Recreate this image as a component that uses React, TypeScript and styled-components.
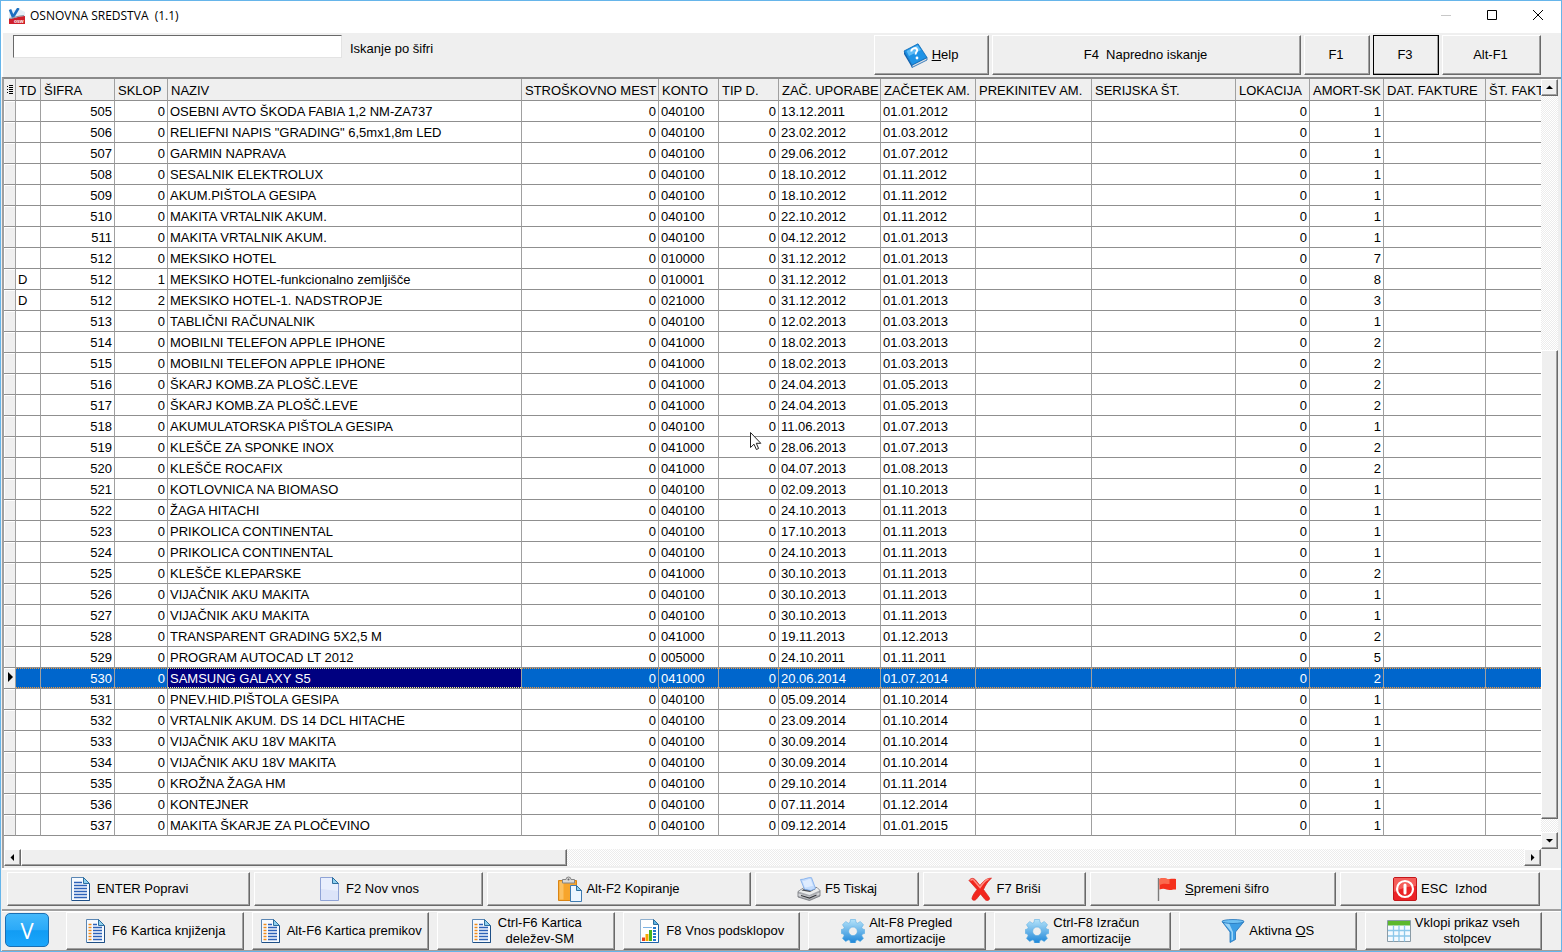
import React from 'react';
import styled, { createGlobalStyle, css } from 'styled-components';

const GlobalStyle = createGlobalStyle`
  *, *::before, *::after { box-sizing: border-box; }
  body { margin: 0; background: #efefef; }
  button, input { font: inherit; color: inherit; }
`;

const dither = css`
  background: repeating-conic-gradient(#ececec 0 25%, #ffffff 0 50%) 0 0 / 2px 2px;
`;

const raised = css`
  border: 1px solid;
  border-color: #ffffff #696969 #696969 #ffffff;
  box-shadow: inset -1px -1px 0 #a0a0a0;
  background: #efefef;
`;

const Window = styled.main`
  position: relative;
  display: flex;
  flex-direction: column;
  min-height: 100vh;
  border: 1px solid #66b5ea;
  background: #efefef;
  color: #000;
  font: 13px/16px 'Liberation Sans', Arial, sans-serif;
`;

const TitleBar = styled.header`
  display: flex;
  align-items: center;
  height: 32px;
  padding-left: 7px;
  background: #fff;
`;

const Title = styled.h1`
  flex: 1;
  margin: 0;
  padding: 0 0 2px 4px;
  font: 12px/16px 'Open Sans', 'Noto Sans', sans-serif;
  white-space: pre;
`;

const CaptionButton = styled.button<{ $dim?: boolean }>`
  display: flex;
  align-items: center;
  justify-content: center;
  width: 46px;
  height: 28px;
  padding: 0 0 4px;
  border: 0;
  background: none;
  color: ${(p) => (p.$dim ? '#c8c8c8' : '#000')};
`;

const Toolbar = styled.div`
  display: flex;
  align-items: flex-start;
  gap: 3px;
  height: 44px;
  padding: 2px 20px 0 10px;
  border-left: 2px solid #fff;
`;

const Search = styled.div`
  display: flex;
  flex: 1;
  align-items: center;
  gap: 8px;
`;

const SearchInput = styled.input`
  width: 329px;
  height: 23px;
  padding: 0 4px;
  border: 1px solid;
  border-color: #696969 #e3e3e3 #e3e3e3 #696969;
  outline: 0;
  background: #fff;
`;

const SearchLabel = styled.label`
  padding-top: 4px;
`;

const PushButton = styled.button<{ $width?: number; $active?: boolean }>`
  ${raised}
  display: flex;
  flex: ${(p) => (p.$width ? `0 0 ${p.$width}px` : '1 1 0')};
  align-items: center;
  justify-content: center;
  gap: 4px;
  min-width: 0;
  padding: 0;
  white-space: pre;
  ${(p) => p.$active && css`border-color: #000;`}

  ${Toolbar} & {
    height: 40px;
    padding-right: 2px;
  }
`;

const GridPane = styled.section`
  display: grid;
  flex: 1;
  grid-template-columns: minmax(0, 1fr) 17px;
  grid-template-rows: 1fr 17px;
  margin-left: 1px;
  border: solid #a0a0a0;
  border-width: 2px 0 0 2px;
  border-top-color: #8a8a8a;
  padding: 0 3px 2px 0;
`;

const TableView = styled.div`
  overflow: hidden;
  background: #fff;
`;

const Table = styled.table`
  width: 100%;
  border-collapse: separate;
  border-spacing: 0;
  table-layout: fixed;
`;

const HeadCell = styled.th`
  height: 22px;
  padding: 2px 0 0 3px;
  overflow: hidden;
  border-right: 1px solid #a0a0a0;
  border-bottom: 1px solid #8f8f8f;
  background: #efefef;
  font-weight: 400;
  text-align: left;
  white-space: nowrap;
  &:last-child { border-right: 0; }
`;

const Cell = styled.td<{ $right?: boolean }>`
  height: 21px;
  padding: 1px 2px 0;
  overflow: hidden;
  border-right: 1px solid #a0a0a0;
  border-bottom: 1px solid #8f8f8f;
  text-align: ${(p) => (p.$right ? 'right' : 'left')};
  white-space: nowrap;
  &:last-child { border-right: 0; }
`;

const MarkCell = styled(Cell)`
  padding: 0;
  background: #efefef;
  box-shadow: inset 1px 1px 0 #fff;
`;

const dots = (color: string) => css`
  background-image:
    repeating-linear-gradient(90deg, ${color} 0 1px, transparent 1px 2px),
    repeating-linear-gradient(90deg, ${color} 0 1px, transparent 1px 2px);
`;

const Row = styled.tr<{ $selected?: boolean }>`
  ${(p) => p.$selected && css`
    color: #fff;
    ${Cell}:not(${MarkCell}) {
      ${dots('#f29a3a')}
      background-color: #0066cc;
      background-position: 0 0, 0 100%;
      background-size: 100% 1px;
      background-repeat: no-repeat;
    }
    ${Cell}[aria-selected='true']:not(${MarkCell}) {
      ${dots('#ffff7f')}
      background-color: #000080;
    }
  `}
`;

const ScrollTrack = styled.div<{ $vertical?: boolean }>`
  ${dither}
  display: flex;
  flex-direction: ${(p) => (p.$vertical ? 'column' : 'row')};
`;

const ScrollButton = styled.button`
  ${raised}
  display: flex;
  flex: 0 0 17px;
  align-items: center;
  justify-content: center;
  width: 17px;
  height: 17px;
  padding: 0;
`;

const ScrollSpace = styled.div<{ $grow: number }>`
  flex: ${(p) => p.$grow} 1 0;
`;

const ScrollThumb = styled.div<{ $grow: number }>`
  ${raised}
  flex: ${(p) => p.$grow} 1 0;
`;

const Actions = styled.nav`
  display: grid;
  grid-template-columns: 243fr 229fr 264fr 164fr 163fr 246fr 200fr;
  gap: 4px;
  height: 42px;
  margin-left: 1px;
  padding: 2px 21px 3px 5px;
  border-top: 2px solid #fff;
  border-bottom: 1px solid #a0a0a0;
`;

const Shortcuts = styled.nav`
  display: flex;
  gap: 8px;
  height: 41px;
  margin-left: 1px;
  padding: 1px 19px 0 3px;
  border-top: 1px solid #a0a0a0;
  border-bottom: 1px solid #a0a0a0;
  box-shadow: inset 0 1px 0 #fff;
`;

const BrandButton = styled.button`
  width: 44px;
  height: 34px;
  margin: 1px 9px 0 0;
  padding: 0;
  border: 1px solid #1b6fb3;
  border-radius: 5px;
  background: linear-gradient(#45b9fb 0%, #2aa9f8 50%, #119cf4 52%, #1ba6fb 100%);
  color: #fff;
  font: 22px/30px 'Open Sans', 'Noto Sans', sans-serif;
`;

const Pointer = styled.svg`
  position: absolute;
  top: 430px;
  left: 748px;
  pointer-events: none;
`;

const DocIcon = ({ bullets, blank }: { bullets?: boolean; blank?: boolean }) => (
  <svg width="24" height="24" viewBox="0 0 24 24" aria-hidden="true">
    <path d="M2.500 .5h12l6 6v17h-18z" fill={blank ? '#e9effd' : '#f6faff'} stroke={blank ? '#8fa3d6' : '#5a86b4'} />
    {blank && <path d="M3 12v11h17V14z" fill="#d3dcf7" opacity=".6" />}
    <path d="M14.500 .5v6h6z" fill="#8ed0ee" stroke="#2e6f9f" />
    {!blank && (
      <>
        <path d="M20.500 7v16.500H3" fill="none" stroke="#1e4f86" />
        <path
          d={bullets
            ? 'M9 5.500h4M9 8.500h9M9 11.500h9M9 14.500h9M9 17.500h9M9 20.500h9'
            : 'M5 5.500h8M5 8.500h13M5 11.500h13M5 14.500h13M5 17.500h13M5 20.500h13'}
          stroke="#2d62b8"
          strokeWidth="1.300"
        />
        {bullets && <path d="M4.500 5.500h3M4.500 8.500h3M4.500 11.500h3M4.500 14.500h3M4.500 17.500h3M4.500 20.500h3" stroke="#f08c1c" strokeWidth="1.500" />}
      </>
    )}
  </svg>
);

const ChartIcon = () => (
  <svg width="24" height="24" viewBox="0 0 24 24" aria-hidden="true">
    <path d="M2.500 .5h13l5 5v18h-18z" fill="#fff" stroke="#8fb0cf" />
    <path d="M2 23.500h18.500V6" fill="none" stroke="#1e62a8" />
    <path d="M15.500 .5v5h5z" fill="#5fb4e4" stroke="#2e6f9f" />
    <path d="M16.500 8v14" stroke="#2477cc" strokeWidth="3" strokeDasharray="2 1" />
    <path d="M5 8.500h9" stroke="#7fb4e4" />
    <path d="M4 18.500h3V22H4z" fill="#e8401c" />
    <path d="M7.500 15h3v7h-3z" fill="#f7a800" />
    <path d="M11 11h3v11h-3z" fill="#48b41e" />
  </svg>
);

const PasteIcon = () => (
  <svg width="24" height="26" viewBox="0 0 24 26" aria-hidden="true">
    <path d="M.5 4.500h18v20H.5z" fill="#f7a52c" stroke="#d98413" />
    <path d="M1.500 5.500h4v18h-4z" fill="#fbc061" />
    <path d="M4.500 3.500H8a2.500 2.500 0 0 1 5 0h3.500V7h-12z" fill="#d9d9d9" stroke="#858585" />
    <circle cx="10.500" cy="3.500" r="1" fill="#666" />
    <path d="M12.500 9.500h6l5 5v11h-11z" fill="#edf6ff" stroke="#3f7bb0" />
    <path d="M18.500 9.500v5h5z" fill="#8ed0ee" stroke="#2e6f9f" />
  </svg>
);

const PrinterIcon = () => (
  <svg width="24" height="24" viewBox="0 0 24 24" aria-hidden="true">
    <path d="M1 14.500L8 10l12 .5 3 3v5.500L12.500 23.500 1 20z" fill="#a9abb0" stroke="#6f7177" strokeWidth=".8" />
    <path d="M1.500 14.500L8 10.500l12 .5 2.500 2.500-10 4.500z" fill="#eceded" />
    <path d="M4.500 13.500L8.500 11l10.500.8-6 3.200z" fill="#4b4e54" />
    <path d="M3.500 2.500C7 2.800 11 0 14.500 .7L18.500 11.500 14 13.500l-6.500-1.200z" fill="#c3dcfd" stroke="#78a8ea" strokeWidth=".8" />
    <path d="M5.500 4C9 4 11 2 13.500 2L16 9c-3 0-5 1.500-8 1.500z" fill="#deecff" />
    <path d="M1.500 16.500l11 3.200 10-4.200v2L12.500 22 1.500 19z" fill="#d4d5d8" />
    <path d="M4 18.500l8.500 2.500 7-3" fill="none" stroke="#34363a" strokeWidth="1.200" />
  </svg>
);

const DeleteIcon = () => (
  <svg width="24" height="24" viewBox="0 0 24 24" aria-hidden="true">
    <path d="M1 3.500C3 .5 6 1 7.500 3L12 8.500C15 4.500 18.500 1 23.500 1.200 20 4 17.500 8 15.500 12.500c2 3 4.500 6 6 8.500.5 2.500-3 3.500-4.500 1.500L12.500 17 8.500 22c-1.500 2-5 1.500-4.500-1C5 17.500 7 15 9 12.500z" fill="#f2261d" stroke="#d8201a" strokeWidth=".7" />
    <path d="M2.500 3.500C4 2 5.500 2.500 6.500 4l5.500 6.500C15 6 17 3.500 20.500 2" fill="none" stroke="#ff8d80" strokeWidth="1.500" />
  </svg>
);

const FlagIcon = () => (
  <svg width="24" height="24" viewBox="0 0 24 24" aria-hidden="true">
    <path d="M1.500 1v23" stroke="#7c7c7c" strokeWidth="1.400" />
    <path d="M2.500 2c4-2.500 7 .5 10 0 2 0 4-.5 6.500 0v10.500c-3-.5-4 .8-6.500 .5-3 0-5-2.500-10-.5z" fill="#f5301c" />
    <path d="M2.500 2c4-2.500 7 .5 10 0v5c-3 0-6-1-10 1z" fill="#fb6a4e" />
  </svg>
);

const ExitIcon = () => (
  <svg width="24" height="24" viewBox="0 0 24 24" aria-hidden="true">
    <rect x=".5" y=".5" width="23" height="23" rx="1.500" fill="#ec2226" stroke="#c3161a" />
    <path d="M1 1h22v8C16 9 8 11 1 15z" fill="#f8716c" opacity=".75" />
    <circle cx="12" cy="12" r="8" fill="none" stroke="#fff" strokeWidth="2.200" />
    <path d="M12 8v8" stroke="#fff" strokeWidth="3" strokeLinecap="round" />
  </svg>
);

const GearIcon = () => (
  <svg width="24" height="24" viewBox="0 0 24 24" aria-hidden="true">
    <defs>
      <linearGradient id="gear" x1="0" y1="0" x2="0" y2="1">
        <stop offset="0" stopColor="#b5e3fa" />
        <stop offset="1" stopColor="#1e86d8" />
      </linearGradient>
    </defs>
    <path
      fillRule="evenodd"
      fill="url(#gear)"
      stroke="#5fb0e4"
      strokeWidth=".6"
      d="M9.500 .5h5l.6 3 1.600.7 2.600-1.700 3.200 3.300-1.700 2.600.7 1.600 2.200.5v4l-2.200.6-.7 1.700 1.700 2.600-3.300 3.200-2.600-1.600-1.600.6-.6 2.400h-5l-.5-2.400-1.600-.6-2.600 1.600-3.300-3.200 1.700-2.600-.7-1.700L.3 14.500v-4l2.200-.5.7-1.600-1.700-2.600 3.200-3.300 2.600 1.700 1.600-.7zM12 8a4.300 4.300 0 1 0 0 8.600A4.300 4.300 0 0 0 12 8z"
    />
  </svg>
);

const FunnelIcon = () => (
  <svg width="24" height="24" viewBox="0 0 24 24" aria-hidden="true">
    <path d="M1 2.500L9 13v10.500l5.500-3V13L23 2.500z" fill="#3d9ee4" stroke="#2273ba" strokeWidth=".8" />
    <path d="M3 4l7.500 9v8.500l1.500-.8V13L8 4z" fill="#9bd5f8" />
    <ellipse cx="12" cy="2.500" rx="11" ry="2" fill="#6fc0f2" stroke="#2273ba" strokeWidth=".8" />
  </svg>
);

const GridIcon = () => (
  <svg width="24" height="24" viewBox="0 0 24 24" aria-hidden="true">
    <path d="M.5 1.500h23v21H.5z" fill="#f4faff" stroke="#8a9ba6" />
    <path d="M1 2h22v4.500H1z" fill="#5cb82c" />
    <path d="M1 11.500h22M1 17h22M6.500 6.500v16M12 6.500v16M17.500 6.500v16" stroke="#8cc8ea" strokeWidth="1.300" />
  </svg>
);

const HelpIcon = () => (
  <svg width="25" height="25" viewBox="0 0 25 25" aria-hidden="true">
    <path d="M1 8l8 14v2.500L1 11z" fill="#0e5fae" />
    <path d="M9 22l15-7.500v2.500L9 24.500z" fill="#d6dde4" stroke="#1465b0" strokeWidth=".8" />
    <path d="M1 8L15 .8 24 14.500 9 22z" fill="#1e93e6" stroke="#0d68b5" strokeWidth=".8" />
    <path d="M3.500 8L14.500 2.300 18 7 6 13z" fill="#5dbcf7" />
    <path d="M8.500 8.500c-.5-3 4.500-4.700 5.600-1.900.8 2.200-2.100 2.400-1.300 4.900" fill="none" stroke="#fff" strokeWidth="2" />
    <circle cx="14" cy="15" r="1.400" fill="#fff" />
  </svg>
);

const AppIcon = () => (
  <svg width="18" height="18" viewBox="0 0 18 18" aria-hidden="true">
    <path d="M1 3l10-2 6 3v12H1z" fill="#e6eff6" />
    <path d="M2 1.500l3 7.500L10.500 0" fill="none" stroke="#1c6fc0" strokeWidth="2.600" />
    <path d="M1 11c5 0 8-3 16-3v8H1z" fill="#cf1f2b" />
    <path d="M1 10.500c5 0 8-3 15-3" fill="none" stroke="#8e99a6" strokeWidth="1.200" />
    <text x="6" y="15" fill="#fff" fontFamily="Liberation Sans" fontSize="5" fontWeight="700">osw</text>
  </svg>
);

const Arrow = ({ d }: { d: string }) => (
  <svg width="7" height="7" viewBox="0 0 7 7" aria-hidden="true"><path d={d} fill="#000" /></svg>
);

const columns: { label: string; width?: number; right?: boolean }[] = [
  { label: 'TD', width: 25 },
  { label: 'ŠIFRA', width: 74, right: true },
  { label: 'SKLOP', width: 53, right: true },
  { label: 'NAZIV', width: 354 },
  { label: 'STROŠKOVNO MEST', width: 137, right: true },
  { label: 'KONTO', width: 60 },
  { label: 'TIP D.', width: 60, right: true },
  { label: 'ZAČ. UPORABE', width: 102 },
  { label: 'ZAČETEK AM.', width: 95 },
  { label: 'PREKINITEV AM.', width: 116 },
  { label: 'SERIJSKA ŠT.', width: 144 },
  { label: 'LOKACIJA', width: 74, right: true },
  { label: 'AMORT-SK', width: 74, right: true },
  { label: 'DAT. FAKTURE', width: 102 },
  { label: 'ŠT. FAKT' },
];

// td, šifra, sklop, naziv, konto, začetek uporabe, začetek amortizacije, amortizacijska skupina
const assets: string[][] = [
  ['', '505', '0', 'OSEBNI AVTO ŠKODA FABIA 1,2 NM-ZA737', '040100', '13.12.2011', '01.01.2012', '1'],
  ['', '506', '0', 'RELIEFNI NAPIS "GRADING" 6,5mx1,8m LED', '040100', '23.02.2012', '01.03.2012', '1'],
  ['', '507', '0', 'GARMIN NAPRAVA', '040100', '29.06.2012', '01.07.2012', '1'],
  ['', '508', '0', 'SESALNIK ELEKTROLUX', '040100', '18.10.2012', '01.11.2012', '1'],
  ['', '509', '0', 'AKUM.PIŠTOLA GESIPA', '040100', '18.10.2012', '01.11.2012', '1'],
  ['', '510', '0', 'MAKITA VRTALNIK AKUM.', '040100', '22.10.2012', '01.11.2012', '1'],
  ['', '511', '0', 'MAKITA VRTALNIK AKUM.', '040100', '04.12.2012', '01.01.2013', '1'],
  ['', '512', '0', 'MEKSIKO HOTEL', '010000', '31.12.2012', '01.01.2013', '7'],
  ['D', '512', '1', 'MEKSIKO HOTEL-funkcionalno zemljišče', '010001', '31.12.2012', '01.01.2013', '8'],
  ['D', '512', '2', 'MEKSIKO HOTEL-1. NADSTROPJE', '021000', '31.12.2012', '01.01.2013', '3'],
  ['', '513', '0', 'TABLIČNI RAČUNALNIK', '040100', '12.02.2013', '01.03.2013', '1'],
  ['', '514', '0', 'MOBILNI TELEFON APPLE IPHONE', '041000', '18.02.2013', '01.03.2013', '2'],
  ['', '515', '0', 'MOBILNI TELEFON APPLE IPHONE', '041000', '18.02.2013', '01.03.2013', '2'],
  ['', '516', '0', 'ŠKARJ KOMB.ZA PLOŠČ.LEVE', '041000', '24.04.2013', '01.05.2013', '2'],
  ['', '517', '0', 'ŠKARJ KOMB.ZA PLOŠČ.LEVE', '041000', '24.04.2013', '01.05.2013', '2'],
  ['', '518', '0', 'AKUMULATORSKA PIŠTOLA GESIPA', '040100', '11.06.2013', '01.07.2013', '1'],
  ['', '519', '0', 'KLEŠČE ZA SPONKE INOX', '041000', '28.06.2013', '01.07.2013', '2'],
  ['', '520', '0', 'KLEŠČE ROCAFIX', '041000', '04.07.2013', '01.08.2013', '2'],
  ['', '521', '0', 'KOTLOVNICA NA BIOMASO', '040100', '02.09.2013', '01.10.2013', '1'],
  ['', '522', '0', 'ŽAGA HITACHI', '040100', '24.10.2013', '01.11.2013', '1'],
  ['', '523', '0', 'PRIKOLICA CONTINENTAL', '040100', '17.10.2013', '01.11.2013', '1'],
  ['', '524', '0', 'PRIKOLICA CONTINENTAL', '040100', '24.10.2013', '01.11.2013', '1'],
  ['', '525', '0', 'KLEŠČE KLEPARSKE', '041000', '30.10.2013', '01.11.2013', '2'],
  ['', '526', '0', 'VIJAČNIK AKU MAKITA', '040100', '30.10.2013', '01.11.2013', '1'],
  ['', '527', '0', 'VIJAČNIK AKU MAKITA', '040100', '30.10.2013', '01.11.2013', '1'],
  ['', '528', '0', 'TRANSPARENT GRADING 5X2,5 M', '041000', '19.11.2013', '01.12.2013', '2'],
  ['', '529', '0', 'PROGRAM AUTOCAD LT 2012', '005000', '24.10.2011', '01.11.2011', '5'],
  ['', '530', '0', 'SAMSUNG GALAXY S5', '041000', '20.06.2014', '01.07.2014', '2'],
  ['', '531', '0', 'PNEV.HID.PIŠTOLA GESIPA', '040100', '05.09.2014', '01.10.2014', '1'],
  ['', '532', '0', 'VRTALNIK AKUM. DS 14 DCL HITACHE', '040100', '23.09.2014', '01.10.2014', '1'],
  ['', '533', '0', 'VIJAČNIK AKU 18V MAKITA', '040100', '30.09.2014', '01.10.2014', '1'],
  ['', '534', '0', 'VIJAČNIK AKU 18V MAKITA', '040100', '30.09.2014', '01.10.2014', '1'],
  ['', '535', '0', 'KROŽNA ŽAGA HM', '040100', '29.10.2014', '01.11.2014', '1'],
  ['', '536', '0', 'KONTEJNER', '040100', '07.11.2014', '01.12.2014', '1'],
  ['', '537', '0', 'MAKITA ŠKARJE ZA PLOČEVINO', '040100', '09.12.2014', '01.01.2015', '1'],
];

const SELECTED = '530';

const toCells = ([td, id, sub, name, konto, used, start, group]: string[]) => [
  td, id, sub, name, '0', konto, '0', used, start, '', '', '0', group, '', '',
];

export default function App() {
  return (
    <>
      <GlobalStyle />
      <Window>
        <TitleBar>
          <AppIcon />
          <Title>OSNOVNA SREDSTVA  (1.1)</Title>
          <CaptionButton $dim aria-label="Minimize">
            <svg width="10" height="10"><path d="M0 5.500h10" stroke="currentColor" /></svg>
          </CaptionButton>
          <CaptionButton aria-label="Maximize">
            <svg width="10" height="10"><path d="M.5 .5h9v9h-9z" fill="none" stroke="currentColor" /></svg>
          </CaptionButton>
          <CaptionButton aria-label="Close">
            <svg width="10" height="10"><path d="M0 0l10 10M10 0L0 10" stroke="currentColor" /></svg>
          </CaptionButton>
        </TitleBar>

        <Toolbar>
          <Search>
            <SearchInput id="code-search" type="text" />
            <SearchLabel htmlFor="code-search">Iskanje po šifri</SearchLabel>
          </Search>
          <PushButton $width={115}><HelpIcon /><span><u>H</u>elp</span></PushButton>
          <PushButton $width={309}>F4  Napredno iskanje</PushButton>
          <PushButton $width={66}>F1</PushButton>
          <PushButton $width={66} $active>F3</PushButton>
          <PushButton $width={99}>Alt-F1</PushButton>
        </Toolbar>

        <GridPane>
          <TableView>
            <Table>
              <colgroup>
                <col width={12} />
                {columns.map((c) => <col key={c.label} width={c.width} />)}
              </colgroup>
              <thead>
                <tr>
                  <HeadCell aria-label="Columns">
                    <svg width="7" height="10" viewBox="0 0 7 10" aria-hidden="true">
                      <path d="M0 1.500h1M0 4.500h1M0 7.500h1M2 .5h4M2 2.500h4M2 4.500h4M2 6.500h4M2 8.500h4" stroke="#000" />
                    </svg>
                  </HeadCell>
                  {columns.map((c) => <HeadCell key={c.label} scope="col">{c.label}</HeadCell>)}
                </tr>
              </thead>
              <tbody>
                {assets.map((asset, i) => {
                  const selected = asset[1] === SELECTED;
                  return (
                    <Row key={i} $selected={selected}>
                      <MarkCell>
                        {selected && (
                          <svg width="11" height="10" viewBox="0 0 11 10" aria-hidden="true"><path d="M4 0v10l5-5z" /></svg>
                        )}
                      </MarkCell>
                      {toCells(asset).map((value, c) => (
                        <Cell key={c} $right={columns[c].right} aria-selected={selected && c === 3 ? true : undefined}>
                          {value}
                        </Cell>
                      ))}
                    </Row>
                  );
                })}
              </tbody>
            </Table>
          </TableView>
          <ScrollTrack $vertical>
            <ScrollButton aria-label="Scroll up"><Arrow d="M0 5h7L3.500 1.500z" /></ScrollButton>
            <ScrollSpace $grow={255} />
            <ScrollThumb $grow={468} />
            <ScrollSpace $grow={13} />
            <ScrollButton aria-label="Scroll down"><Arrow d="M0 2h7L3.500 5.500z" /></ScrollButton>
          </ScrollTrack>
          <ScrollTrack>
            <ScrollButton aria-label="Scroll left"><Arrow d="M5 0v7L1.500 3.500z" /></ScrollButton>
            <ScrollThumb $grow={545} />
            <ScrollSpace $grow={958} />
            <ScrollButton aria-label="Scroll right"><Arrow d="M2 0v7l3.500-3.500z" /></ScrollButton>
          </ScrollTrack>
        </GridPane>

        <Actions>
          <PushButton><DocIcon /><span>ENTER Popravi</span></PushButton>
          <PushButton><DocIcon blank /><span>F2 Nov vnos</span></PushButton>
          <PushButton><PasteIcon /><span>Alt-F2 Kopiranje</span></PushButton>
          <PushButton><PrinterIcon /><span>F5 Tiskaj</span></PushButton>
          <PushButton><DeleteIcon /><span>F7 Briši</span></PushButton>
          <PushButton><FlagIcon /><span><u>S</u>premeni šifro</span></PushButton>
          <PushButton><ExitIcon /><span>ESC  Izhod</span></PushButton>
        </Actions>

        <Shortcuts>
          <BrandButton>V</BrandButton>
          <PushButton><DocIcon bullets /><span>F6 Kartica knjiženja</span></PushButton>
          <PushButton><DocIcon bullets /><span>Alt-F6 Kartica premikov</span></PushButton>
          <PushButton><DocIcon bullets /><span>Ctrl-F6 Kartica<br />deležev-SM</span></PushButton>
          <PushButton><ChartIcon /><span>F8 Vnos podsklopov</span></PushButton>
          <PushButton><GearIcon /><span>Alt-F8 Pregled<br />amortizacije</span></PushButton>
          <PushButton><GearIcon /><span>Ctrl-F8 Izračun<br />amortizacije</span></PushButton>
          <PushButton><FunnelIcon /><span>Aktivna <u>O</u>S</span></PushButton>
          <PushButton><GridIcon /><span>Vklopi prikaz vseh<br />stolpcev</span></PushButton>
        </Shortcuts>

        <Pointer width="13" height="20" viewBox="0 0 13 20" aria-hidden="true">
          <path d="M1.500 1.500v15l3.500-3.300 2.400 5.300 2.200-1-2.300-5.200h4.500z" fill="#fff" stroke="#222" />
        </Pointer>
      </Window>
    </>
  );
}
